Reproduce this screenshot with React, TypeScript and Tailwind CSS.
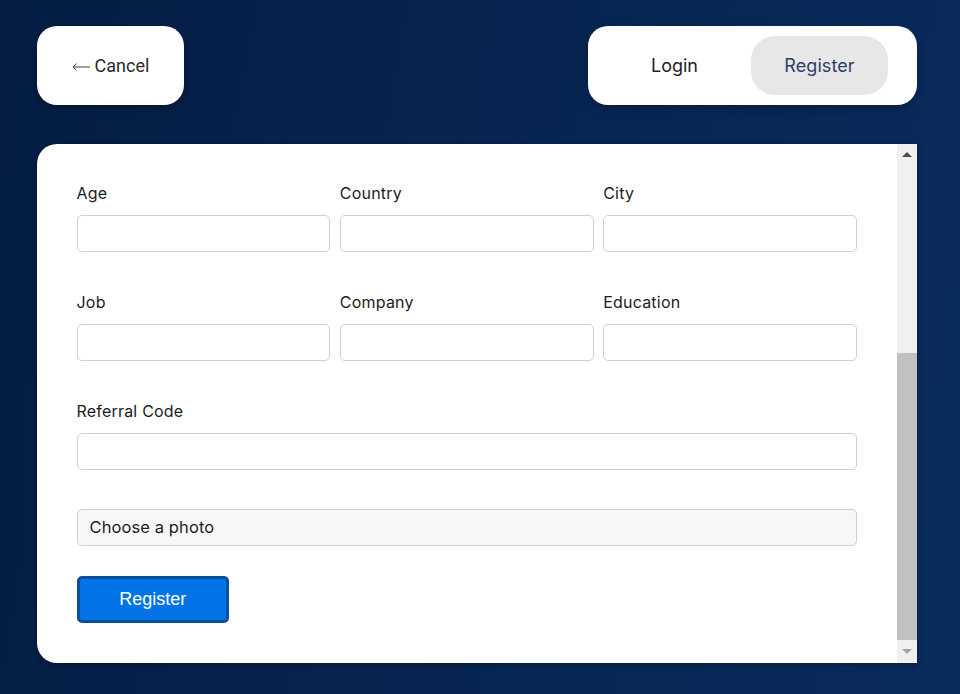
const labelFont = "font-['Inter','Noto_Sans',sans-serif]";

function Field({ label }: { label: string }) {
  return (
    <div className="flex flex-col">
      <label className={`${labelFont} mb-[10px] h-[24px] text-[16px] leading-[24px] tracking-[0.2px] text-[#1c1c1c]`}>{label}</label>
      <input
        type="text"
        className="h-[37px] w-full rounded-[5px] border border-[#d0d0d0] bg-white"
      />
    </div>
  );
}

export default function App() {
  return (
    <div className="flex h-[694px] w-[960px] flex-col overflow-hidden bg-[linear-gradient(100deg,#051d44_0%,#0a2c5d_100%)] pl-[37px] pr-[43px] pt-[26px]">
      <div className="flex items-start justify-between">
        <button className="flex h-[79px] w-[147px] items-center justify-center gap-[5px] rounded-[20px] bg-white font-['Roboto',sans-serif] text-[18px] text-[#2b2b2b] shadow-[0_4px_10px_rgba(0,0,0,0.25)]">
          <svg width="18" height="10" viewBox="0 0 18 10" className="mt-[2px]" fill="none" stroke="#444444" strokeWidth="1">
            <path d="M18 5H1" />
            <path d="M4.5 1.5 1 5l3.5 3.5" />
          </svg>
          <span>Cancel</span>
        </button>
        <div className="flex h-[79px] w-[329px] items-center rounded-[20px] bg-white pl-[18px] pr-[29px] shadow-[0_4px_10px_rgba(0,0,0,0.25)]">
          <button className={`${labelFont} h-[59px] w-[137px] text-[18px] text-[#222222]`}>Login</button>
          <button className={`${labelFont} ml-auto h-[59px] w-[137px] rounded-[24px] bg-[#e7e7e7] text-[18px] tracking-[0.1px] text-[#2f3f66]`}>Register</button>
        </div>
      </div>

      <div className="mt-[39px] flex h-[518.5px] w-[880px] overflow-hidden rounded-l-[20px] bg-white shadow-[0_2px_6px_rgba(0,0,0,0.3)]">
        <form className="flex-1 pl-[39.5px] pr-[40px] pt-[37px]">
          <div className="grid grid-cols-3 gap-x-[9.6px] gap-y-[38px]">
            <Field label="Age" />
            <Field label="Country" />
            <Field label="City" />
            <Field label="Job" />
            <Field label="Company" />
            <Field label="Education" />
          </div>
          <div className="mt-[38px]">
            <Field label="Referral Code" />
          </div>
          <div className={`${labelFont} mt-[39px] flex h-[37px] items-center rounded-[5px] border border-[#d0d0d0] bg-[#f7f7f7] pl-[12px] text-[16.5px] tracking-[0.1px] text-[#1c1c1c]`}>
            Choose a photo
          </div>
          <button
            type="button"
            className="mt-[30px] h-[47px] w-[152.5px] rounded-[5px] border-[3px] border-[#0b4f9f] bg-[#0473e6] font-['Liberation_Sans',sans-serif] text-[18px] text-white"
          >
            Register
          </button>
        </form>

        <div className="flex w-[20px] flex-col bg-[#f0f0f0]">
          <div className="flex h-[20px] items-center justify-center">
            <svg width="10" height="5" viewBox="0 0 10 5"><path d="M5 0 10 5H0Z" fill="#505050" /></svg>
          </div>
          <div className="mt-[189px] h-[287px] bg-[#c1c1c1]" />
          <div className="flex h-[22px] items-center justify-center">
            <svg width="10" height="5" viewBox="0 0 10 5"><path d="M0 0H10L5 5Z" fill="#a3a3a3" /></svg>
          </div>
        </div>
      </div>
    </div>
  );
}
